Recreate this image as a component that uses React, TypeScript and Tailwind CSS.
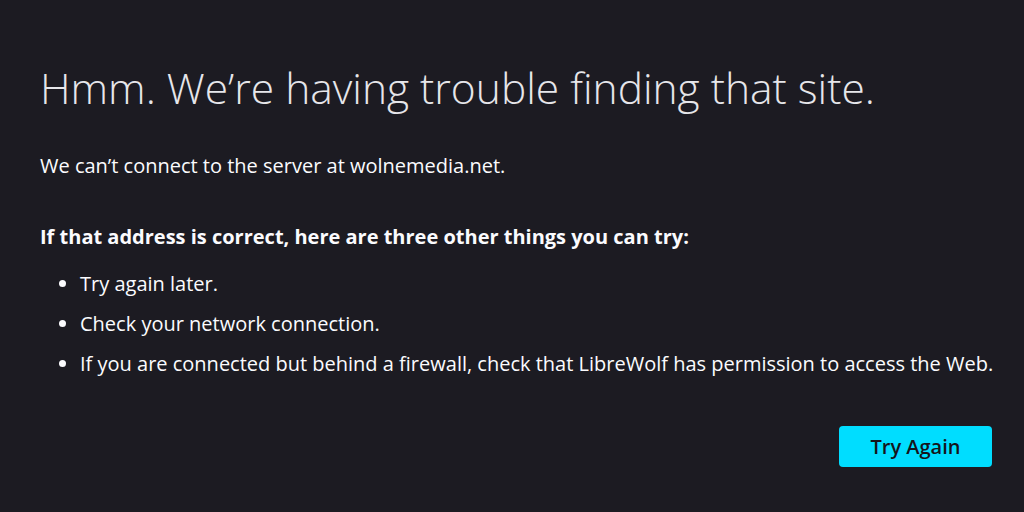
export default function App() {
  return (
    <div
      className="w-[1024px] h-[512px] bg-[#1c1b22] text-[#fbfbfe] overflow-hidden"
      style={{ fontFamily: '"Open Sans", "Noto Sans", sans-serif' }}
    >
      <div className="pl-[40px] pr-[32px] pt-[58px]">
        <h1 className="text-[42.5px] font-light leading-[60px] text-[#e6e6ea] whitespace-nowrap">
          Hmm. We’re having trouble finding that site.
        </h1>
        <p className="mt-[36px] text-[20px] leading-[24px]">
          We can’t connect to the server at wolnemedia.net.
        </p>
        <p className="mt-[47px] text-[20px] leading-[24px] font-bold">
          If that address is correct, here are three other things you can try:
        </p>
        <ul className="mt-[23px] pl-[40px] list-disc text-[20px] leading-[24px] flex flex-col gap-[16px] whitespace-nowrap">
          <li>Try again later.</li>
          <li>Check your network connection.</li>
          <li>If you are connected but behind a firewall, check that LibreWolf has permission to access the Web.</li>
        </ul>
        <div className="mt-[50px] flex justify-end">
          <button className="w-[153px] h-[41px] rounded-[4px] bg-[#00ddff] text-[#15141a] text-[20px] font-semibold">
            Try Again
          </button>
        </div>
      </div>
    </div>
  );
}
